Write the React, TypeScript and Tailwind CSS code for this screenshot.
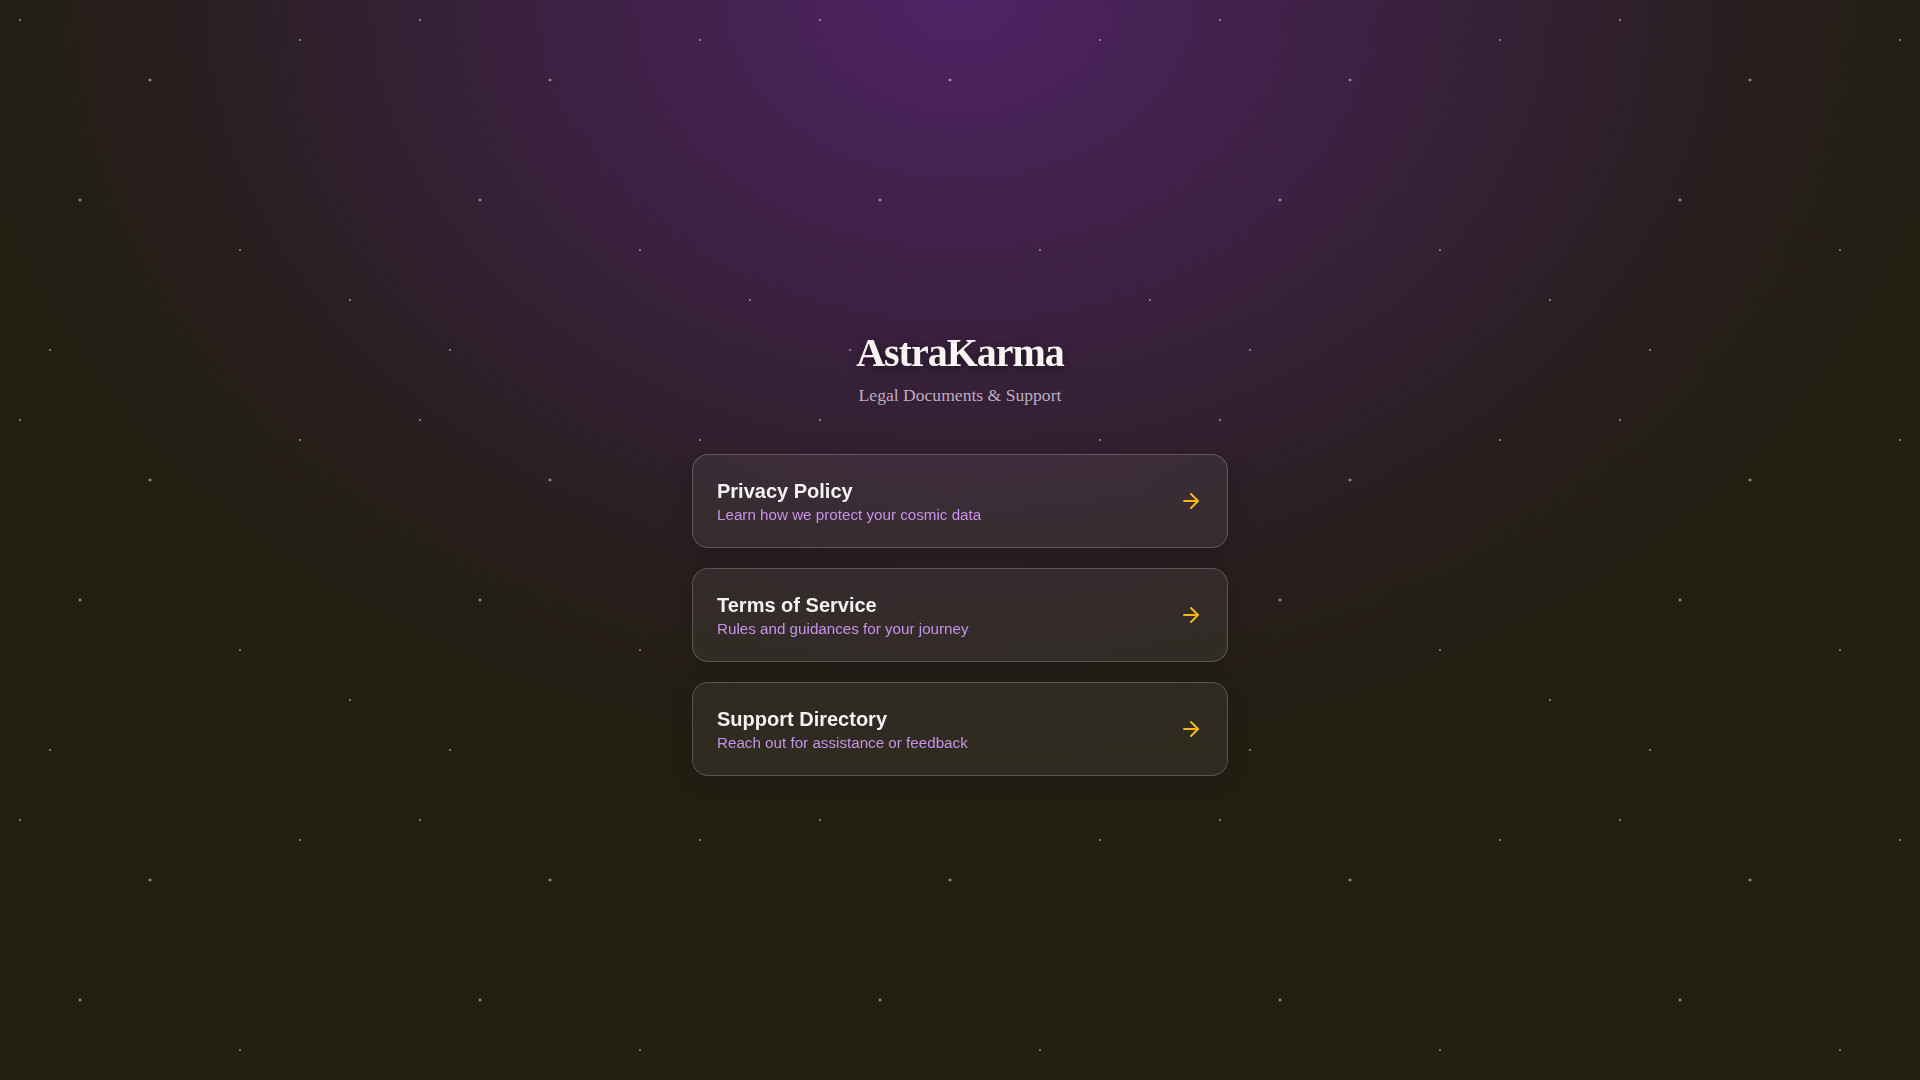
import { ArrowRight } from "lucide-react";

const links = [
    {
        title: "Privacy Policy",
        description: "Learn how we protect your cosmic data",
        href: "#privacy",
    },
    {
        title: "Terms of Service",
        description: "Rules and guidances for your journey",
        href: "#terms",
    },
    {
        title: "Support Directory",
        description: "Reach out for assistance or feedback",
        href: "#support",
    },
];

const App: React.FC = () => {
    return (
        <div className="min-h-screen bg-[#211e12] bg-[radial-gradient(ellipse_1050px_800px_at_50%_0%,#4f2364_0%,rgba(79,35,100,0.55)_42%,rgba(79,35,100,0.18)_72%,transparent_95%)]">
            {/* star field */}
            <div className="flex min-h-screen flex-col items-center bg-[radial-gradient(1.4px_1.4px_at_20px_20px,rgba(255,255,255,0.85),transparent),radial-gradient(1.4px_1.4px_at_300px_40px,rgba(255,255,255,0.8),transparent),radial-gradient(2px_2px_at_150px_80px,rgba(255,255,255,0.7),transparent),radial-gradient(2px_2px_at_80px_200px,rgba(255,255,255,0.7),transparent),radial-gradient(1.4px_1.4px_at_240px_250px,rgba(255,255,255,0.8),transparent),radial-gradient(1.4px_1.4px_at_350px_300px,rgba(255,255,255,0.8),transparent),radial-gradient(1.4px_1.4px_at_50px_350px,rgba(255,255,255,0.8),transparent)] bg-size-[400px_400px] pt-[329px] font-['Liberation_Sans',Arial,sans-serif]">
                <header className="mb-[45px] text-center">
                    <h1 className="font-['Liberation_Serif','Times_New_Roman',serif] text-[40px] leading-[48px] font-bold tracking-tight text-[#f7f4f1] drop-shadow-[0_2px_6px_rgba(0,0,0,0.45)]">
                        AstraKarma
                    </h1>
                    <p className="mt-1 font-['Liberation_Serif','Times_New_Roman',serif] text-[1.1rem] leading-7 text-[#bcaec2]">
                        Legal Documents &amp; Support
                    </p>
                </header>

                <nav className="flex w-[536px] flex-col gap-5">
                    {links.map((link) => (
                        <a
                            key={link.href}
                            href={link.href}
                            className="flex items-center justify-between rounded-2xl border border-white/20 bg-white/[0.06] px-6 py-[22px] shadow-[0_4px_24px_rgba(0,0,0,0.15)] backdrop-blur-md transition-colors hover:bg-white/10">
                            <div>
                                <h2 className="text-xl leading-7 font-semibold text-[#f4f1f3]">
                                    {link.title}
                                </h2>
                                <p className="text-[15.2px] leading-5 text-[#c792e8]">
                                    {link.description}
                                </p>
                            </div>
                            <ArrowRight
                                size={24}
                                strokeWidth={2}
                                className="text-[#f2b816]"
                            />
                        </a>
                    ))}
                </nav>
            </div>
        </div>
    );
};

export default App;
